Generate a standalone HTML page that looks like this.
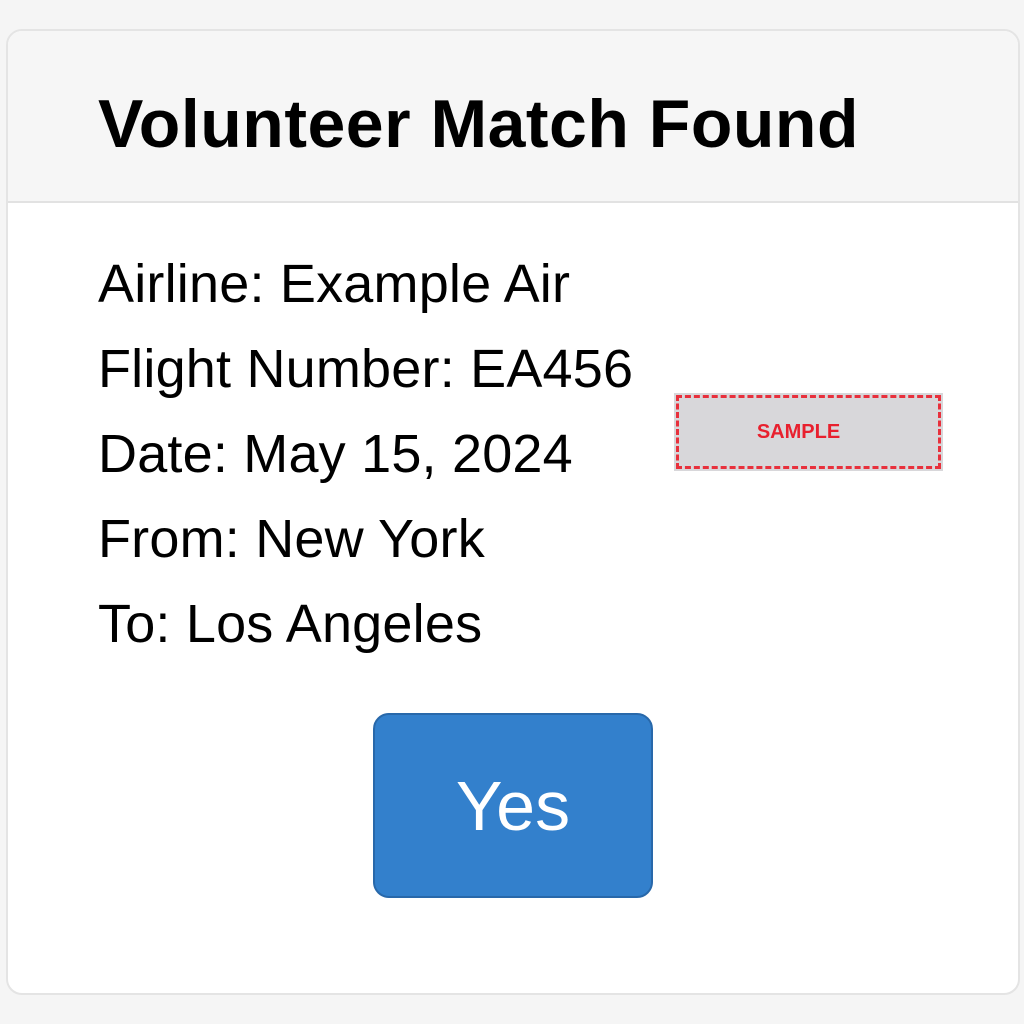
<!DOCTYPE html>
<html><head><style>
body{margin:0;width:1024px;height:1024px;background:#f5f5f5;font-family:"Liberation Sans",sans-serif;position:relative;overflow:hidden}
.card{position:absolute;left:6px;top:29px;width:1010px;height:962px;border:2px solid #e4e4e4;border-radius:16px;background:#fff;overflow:hidden}
.hdr{height:170px;background:#f6f6f6;border-bottom:2px solid #e2e2e2;position:relative}
.hdr h1{position:absolute;left:90px;top:59px;margin:0;font-size:68px;font-weight:bold;color:#000;letter-spacing:0.5px;line-height:1}
.line{position:absolute;left:90px;font-size:54px;color:#000;line-height:1;letter-spacing:0.2px}
.sample{position:absolute;left:668px;top:364px;width:265px;height:74px;background:#d8d7da;border:3px dashed #e8303c;box-shadow:0 0 0 2px #d8d7da;display:flex;align-items:center;justify-content:center;color:#e8202e;font-weight:bold;font-size:20px;padding-right:50px;box-sizing:border-box;padding-left:30px}
.btn{position:absolute;left:365px;top:682px;width:276px;height:181px;background:#3380cc;border:2px solid #2868aa;border-radius:16px;color:#fff;font-size:70px;display:flex;align-items:center;justify-content:center}
</style></head><body>
<div class="card">
<div class="hdr"><h1>Volunteer Match Found</h1></div>
<div class="line" style="top:226px">Airline: Example Air</div>
<div class="line" style="top:311px">Flight Number: EA456</div>
<div class="line" style="top:396px">Date: May 15, 2024</div>
<div class="line" style="top:481px">From: New York</div>
<div class="line" style="top:566px">To: Los Angeles</div>
<div class="sample">SAMPLE</div>
<div class="btn">Yes</div>
</div>
</body></html>
